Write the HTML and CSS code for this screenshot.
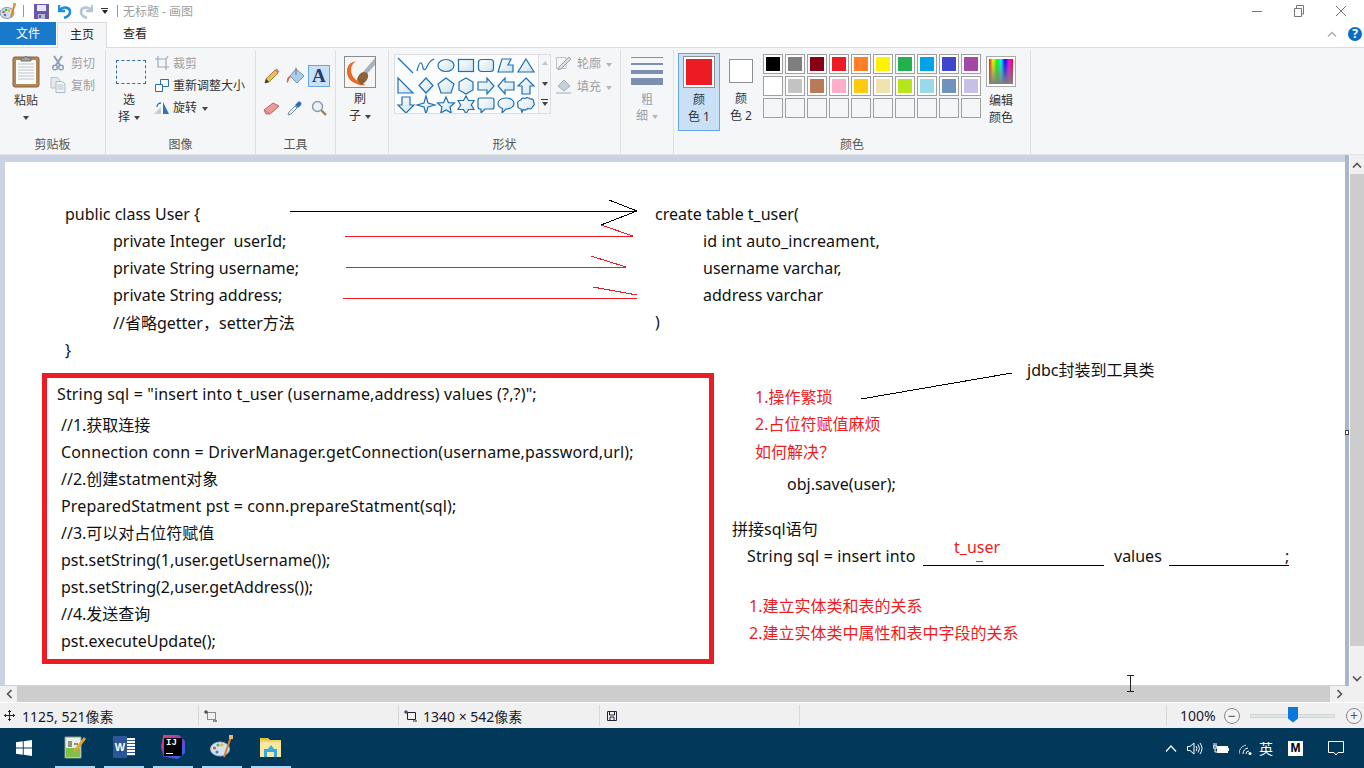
FILE: index.html
```html
<!DOCTYPE html>
<html lang="zh">
<head>
<meta charset="utf-8">
<title>无标题 - 画图</title>
<link rel="stylesheet" href="styles.css">
</head>
<body>
<div class="window">
  <header class="titlebar">
    <svg class="qa-paint" width="17" height="18" viewBox="0 0 17 18"><ellipse cx="7" cy="11" rx="7" ry="5.5" fill="#cfe0ee" stroke="#7d97ad"/><circle cx="3.5" cy="10" r="1.3" fill="#d9534f"/><circle cx="6" cy="8" r="1.3" fill="#4fa84f"/><circle cx="9" cy="8.5" r="1.3" fill="#e6b82e"/><circle cx="5" cy="13" r="1.3" fill="#3a7fc4"/><path d="M15 1 L11 15" stroke="#d5842c" stroke-width="2"/><path d="M13 1h3v3h-3z" fill="#e8a04a"/></svg>
    <span class="qa-sep"></span>
    <svg class="qa-save" width="15" height="15" viewBox="0 0 15 15"><path d="M0 0H15V15H0Z" fill="#6a58a8"/><path d="M3 1H12V7H3Z" fill="#e8e6f2"/><path d="M4 10H11V15H4Z" fill="#bdb7d8"/><path d="M5 11H7V14H5Z" fill="#6a58a8"/></svg>
    <svg class="qa-undo" width="14" height="15" viewBox="0 0 14 15"><path d="M1 1V7H7" fill="none" stroke="#1a8ddc" stroke-width="2.4"/><path d="M2 6C5 2 12 3 12 8C12 11 9 13 6 14" fill="none" stroke="#1a8ddc" stroke-width="2.6"/></svg>
    <svg class="qa-redo" width="14" height="15" viewBox="0 0 14 15"><path d="M13 1V7H7" fill="none" stroke="#b4c6d6" stroke-width="2.4"/><path d="M12 6C9 2 2 3 2 8C2 11 5 13 8 14" fill="none" stroke="#b4c6d6" stroke-width="2.6"/></svg>
    <span class="qa-more"><i class="bar"></i><i class="caret dark"></i></span>
    <span class="qa-sep second"></span>
    <span class="title-text">无标题 - 画图</span>
    <div class="winctl">
      <svg width="12" height="12" viewBox="0 0 12 12"><path d="M1 6.500H11" stroke="#777"/></svg>
      <svg width="12" height="12" viewBox="0 0 12 12"><path d="M1.500 3.500H8.500V11.500H1.500ZM3.500 3V0.500H10.500V9H9" fill="none" stroke="#777"/></svg>
      <svg width="12" height="12" viewBox="0 0 12 12"><path d="M1 1L11 11M11 1L1 11" stroke="#777"/></svg>
    </div>
  </header>

  <nav class="tabs">
    <span class="tab file">文件</span>
    <span class="tab active">主页</span>
    <span class="tab view">查看</span>
    <div class="tabs-end">
      <svg width="10" height="6" viewBox="0 0 10 6"><path d="M1 5.500L5 1.500L9 5.500" fill="none" stroke="#aaa" stroke-width="1.300"/></svg>
      <span class="help">?</span>
    </div>
  </nav>

  <section class="ribbon">
    <div class="group g-clip">
      <div class="body">
        <div class="bigbtn paste">
          <svg width="28" height="33" viewBox="0 0 28 33"><rect x="1" y="2" width="26" height="30" rx="2" fill="#b08558" stroke="#8a6238"/><rect x="4" y="5" width="20" height="24" fill="#fbfbf6"/><path d="M6 9H22M6 12H22M6 15H22M6 18H22M6 21H22M6 24H22" stroke="#b9c4cf"/><path d="M9 6V3H12L14 1L16 3H19V6Z" fill="#9ea4aa" stroke="#6d7379"/></svg>
          <span class="t top">粘贴</span>
          <i class="caret dark below"></i>
        </div>
        <div class="rows">
          <div class="row off"><svg width="12" height="16" viewBox="0 0 12 16"><path d="M2 1L8 10M10 1L4 10" stroke="#8da0b5" stroke-width="2"/><circle cx="3" cy="12.500" r="2.300" fill="none" stroke="#8da0b5" stroke-width="1.500"/><circle cx="9" cy="12.500" r="2.300" fill="none" stroke="#8da0b5" stroke-width="1.500"/></svg><span>剪切</span></div>
          <div class="row off"><svg width="15" height="16" viewBox="0 0 15 16"><path d="M0.500 0.500H7L9 3V11H0.500Z" fill="#e4eaf0" stroke="#b5c2cf"/><path d="M5.500 4.500H12L14.500 7V15.500H5.500Z" fill="#f2f5f8" stroke="#a9b8c7"/><path d="M7 8H13M7 10H13M7 12H13" stroke="#b5c2cf"/></svg><span>复制</span></div>
        </div>
      </div>
      <div class="label">剪贴板</div>
    </div>

    <div class="group g-image">
      <div class="body">
        <div class="bigbtn select">
          <span class="marquee"></span>
          <span class="t top">选</span>
          <span class="t">择<i class="caret dark"></i></span>
        </div>
        <div class="rows">
          <div class="row off"><svg width="14" height="14" viewBox="0 0 14 14"><path d="M3 0V11H14M0 3H11V14M11 3L13 0" fill="none" stroke="#9aaabb" stroke-width="1.200"/></svg><span>裁剪</span></div>
          <div class="row"><svg width="14" height="13" viewBox="0 0 14 13"><path d="M5.500 0.500H13.500V7.500H5.500Z" fill="#fff" stroke="#2a6fb3"/><path d="M0.500 5.500H7.500V12.500H0.500Z" fill="#fff" stroke="#2a6fb3"/></svg><span>重新调整大小</span></div>
          <div class="row"><svg width="16" height="13" viewBox="0 0 16 13"><path d="M0 13L7 6V13Z" fill="#c8ced5"/><path d="M9 1L15 13H9Z" fill="#2f77b8"/><path d="M3 6C3 3 5 2 7 2" fill="none" stroke="#2f77b8" stroke-width="1.300"/></svg><span>旋转<i class="caret dark"></i></span></div>
        </div>
      </div>
      <div class="label">图像</div>
    </div>

    <div class="group g-tools">
      <div class="body">
        <div class="toolgrid">
          <span class="tool"><svg width="16" height="16" viewBox="0 0 16 16"><path d="M2 11L11 2L14 5L5 14L1 15Z" fill="#efc24f" stroke="#7d6430" stroke-width=".8"/><path d="M11 2L12.500 0.500L15.500 3.500L14 5Z" fill="#d98080"/><path d="M1 15L2 11L5 14Z" fill="#333"/></svg></span>
          <span class="tool"><svg width="19" height="18" viewBox="0 0 19 18"><path d="M10 2L18 9L11 16L4 9Z" fill="#a9cdea" stroke="#6b93b5"/><path d="M10 0.500V8" stroke="#777"/><path d="M4 9C1 10 0.500 13 1 16C3 15 2.500 11 5 10Z" fill="#e8622a"/></svg></span>
          <span class="tool on"><span class="glyph-a">A</span></span>
          <span class="tool"><svg width="17" height="14" viewBox="0 0 17 14"><path d="M1 9L10 2L16 5L7 13L3 13Z" fill="#ef9a9a" stroke="#b86a6a"/><path d="M1 9L7 13L16 5" fill="none" stroke="#c77"/></svg></span>
          <span class="tool"><svg width="16" height="16" viewBox="0 0 16 16"><path d="M1 15L2 12L8 6L10 8L4 14Z" fill="#e6edf4" stroke="#7a8da0"/><path d="M8 5L11 2C12.500 0.500 15.500 3.500 14 5L11 8Z" fill="#2b6fb5"/></svg></span>
          <span class="tool"><svg width="16" height="16" viewBox="0 0 16 16"><circle cx="6.500" cy="6.500" r="5" fill="#e9f2f9" stroke="#8b9aa8" stroke-width="1.400"/><path d="M10.500 10.500L15 15" stroke="#9a7a4f" stroke-width="2.200"/></svg></span>
        </div>
      </div>
      <div class="label">工具</div>
    </div>

    <div class="group g-brush">
      <div class="body">
        <div class="bigbtn brush">
          <svg class="brush-ic" width="32" height="32" viewBox="0 0 32 32"><rect x=".5" y=".5" width="31" height="31" fill="#f6f6f6" stroke="#8c8c8c"/><path d="M31 2L19 16L22 19L31 9Z" fill="#a9b2bd"/><path d="M9 6C2 8 1 18 6 24C11 28 16 30 22 29C14 26 7 22 7 14C7 11 8 8 12 5Z" fill="#ea6a24"/><path d="M13 24C14 18 19 14 23 17C26 20 23 26 17 29Z" fill="#8d6239"/></svg>
          <span class="t top">刷</span>
          <span class="t">子<i class="caret dark"></i></span>
        </div>
      </div>
      <div class="label">&nbsp;</div>
    </div>

    <div class="group g-shapes">
      <div class="body">
        <div class="gallery">
          <svg class="shapes" width="142" height="58" viewBox="0 -1 142 58">
            <defs><linearGradient id="sg" x1="0" y1="0" x2="1" y2="1"><stop offset="0" stop-color="#fff"/><stop offset="1" stop-color="#cfe3ee"/></linearGradient></defs>
            <g transform="translate(0 0)"><path d="M2 2L17 17"/></g>
            <g transform="translate(20 0)"><path class="nf" d="M1 15C4 3 6 6 7 12C9 17 11 10 13 7C15 4 17 4 18 3"/></g>
            <g transform="translate(40 0)"><ellipse cx="10" cy="9.500" rx="8" ry="6"/></g>
            <g transform="translate(60 0)"><rect x="2.500" y="3.500" width="15" height="12"/></g>
            <g transform="translate(80 0)"><rect x="2.500" y="3.500" width="15" height="12" rx="3"/></g>
            <g transform="translate(100 0)"><path d="M2 16L6 3H15L12 9H17V16Z"/></g>
            <g transform="translate(120 0)"><path d="M10 3L18 16H2Z"/></g>
            <g transform="translate(0 20)"><path d="M2 2V17H17Z"/></g>
            <g transform="translate(20 20)"><path d="M10 2L17 9.500L10 17L3 9.500Z"/></g>
            <g transform="translate(40 20)"><path d="M10 2L18 8L15 17H5L2 8Z"/></g>
            <g transform="translate(60 20)"><path d="M10 2L17 6V14L10 18L3 14V6Z"/></g>
            <g transform="translate(80 20)"><path d="M2 6H11V2L18 10L11 18V14H2Z"/></g>
            <g transform="translate(100 20)"><path d="M18 6H9V2L2 10L9 18V14H18Z"/></g>
            <g transform="translate(120 20)"><path d="M10 2L18 10H14V18H6V10H2Z"/></g>
            <g transform="translate(0 39)"><path d="M6 2H14V10H18L10 18L2 10H6Z"/></g>
            <g transform="translate(20 39)"><path d="M10 1L12 8L19 10L12 12L10 19L8 12L1 10L8 8Z"/></g>
            <g transform="translate(40 39)"><path d="M10 2L12.400 7.600L18.500 8L14 12L15.300 18L10 15L4.700 18L6 12L1.500 8L7.600 7.600Z"/></g>
            <g transform="translate(60 39)"><path d="M10 1L12.500 5.500H18L15.300 10L18 14.500H12.500L10 19L7.500 14.500H2L4.700 10L2 5.500H7.500Z"/></g>
            <g transform="translate(80 39)"><path d="M4 3H16Q18 3 18 5V12Q18 14 16 14H9L5 18V14H4Q2 14 2 12V5Q2 3 4 3Z"/></g>
            <g transform="translate(100 39)"><path d="M10 3C15 3 18 5.500 18 8.500C18 11.500 15 14 10 14L6 18L6.500 13.500C3.500 12.500 2 10.500 2 8.500C2 5.500 5 3 10 3Z"/></g>
            <g transform="translate(120 39)"><path d="M5 5Q6 2 9 3.500Q12 1.500 14 4Q18 3.500 17.500 7Q19.500 10 16.500 11.500Q16 15 12 13.500Q9 16 7 14.500L6 17.500L5 14Q1 13 2 10Q0.500 6 5 5Z"/></g>
          </svg>
          <div class="gal-scroll">
            <i class="gal-up"></i>
            <i class="caret dark"></i>
            <span class="gal-more"><i class="bar"></i><i class="caret dark"></i></span>
          </div>
        </div>
        <div class="rows tight">
          <div class="row off"><svg width="16" height="14" viewBox="0 0 16 14"><path d="M0.500 1.500H10V12.500H0.500Z" fill="#f4f5f7" stroke="#b9c3cd"/><path d="M3 11L13 1L15 3L5 13L2 13.500Z" fill="#d7dde3" stroke="#9aa7b4"/></svg><span>轮廓<i class="caret pale"></i></span></div>
          <div class="row off"><svg width="16" height="15" viewBox="0 0 16 15"><path d="M8 1L14 7L8 12L2 7Z" fill="#c4d0dc" stroke="#a0aebb"/><path d="M0 13H15V15H0Z" fill="#c9d2db"/></svg><span>填充<i class="caret pale"></i></span></div>
        </div>
      </div>
      <div class="label">形状</div>
    </div>

    <div class="group g-size">
      <div class="body">
        <div class="bigbtn size">
          <span class="sizeline s1"></span>
          <span class="sizeline s2"></span>
          <span class="sizeline s3"></span>
          <span class="sizeline s4"></span>
          <span class="t top off">粗</span>
          <span class="t off">细<i class="caret pale"></i></span>
        </div>
      </div>
      <div class="label">&nbsp;</div>
    </div>

    <div class="group g-colors">
      <div class="body">
        <div class="colbtn sel">
          <span class="well big"><i class="red"></i></span>
          <span class="t top">颜</span>
          <span class="t">色 1</span>
        </div>
        <div class="colbtn plain">
          <span class="well small"><i class="white"></i></span>
          <span class="t top">颜</span>
          <span class="t">色 2</span>
        </div>
        <div class="palette">
          <span class="sw"><i class="c01"></i></span><span class="sw"><i class="c02"></i></span><span class="sw"><i class="c03"></i></span><span class="sw"><i class="c04"></i></span><span class="sw"><i class="c05"></i></span><span class="sw"><i class="c06"></i></span><span class="sw"><i class="c07"></i></span><span class="sw"><i class="c08"></i></span><span class="sw"><i class="c09"></i></span><span class="sw"><i class="c10"></i></span>
          <span class="sw"><i class="c11"></i></span><span class="sw"><i class="c12"></i></span><span class="sw"><i class="c13"></i></span><span class="sw"><i class="c14"></i></span><span class="sw"><i class="c15"></i></span><span class="sw"><i class="c16"></i></span><span class="sw"><i class="c17"></i></span><span class="sw"><i class="c18"></i></span><span class="sw"><i class="c19"></i></span><span class="sw"><i class="c20"></i></span>
          <span class="sw"></span><span class="sw"></span><span class="sw"></span><span class="sw"></span><span class="sw"></span><span class="sw"></span><span class="sw"></span><span class="sw"></span><span class="sw"></span><span class="sw"></span>
        </div>
        <div class="colbtn edit">
          <span class="rainbow"></span>
          <span class="t top">编辑</span>
          <span class="t">颜色</span>
        </div>
      </div>
      <div class="label">颜色</div>
    </div>
  </section>

  <main class="workspace">
    <div class="ws-main">
      <div class="canvas-area">
        <div class="canvas">
          <svg class="ink" width="1340" height="523" viewBox="0 0 1340 523">
            <g class="k">
              <path d="M285 49.500H632M604 38L632 49L596 63"/>
              <path d="M856 237L1007 211"/>
              <path d="M918 403.500H1099M1164 403.500H1284"/>
            </g>
            <g class="r">
              <path d="M340 74.500H628M596 63L628 74"/>
              <path d="M341 105.500H621M586 94L621 105"/>
              <path d="M338 136.500H632M588 125L632 133"/>
              <path d="M971 399.500H978"/>
            </g>
          </svg>
          <div class="note n-class">
            <div>public class User {</div>
            <div class="in">private Integer&nbsp; userId;</div>
            <div class="in">private String username;</div>
            <div class="in">private String address;</div>
            <div class="in">//省略getter<span class="tc">，</span>setter方法</div>
            <div>}</div>
          </div>
          <div class="note n-table">
            <div>create table t_user(</div>
            <div class="in wide">id int auto_increament,</div>
            <div class="in">username varchar,</div>
            <div class="in">address varchar</div>
            <div>)</div>
          </div>
          <div class="redbox">
            <div class="sqlhead wide">String sql = "insert into t_user (username,address) values (?,?)";</div>
            <div class="note-flow">
              <div>//1.获取连接</div>
              <div class="wide">Connection conn = DriverManager.getConnection(username,password,url);</div>
              <div>//2.创建statment对象</div>
              <div class="wide">PreparedStatment pst = conn.prepareStatment(sql);</div>
              <div>//3.可以对占位符赋值</div>
              <div>pst.setString(1,user.getUsername());</div>
              <div>pst.setString(2,user.getAddress());</div>
              <div>//4.发送查询</div>
              <div>pst.executeUpdate();</div>
            </div>
          </div>
          <div class="note n-jdbc">jdbc封装到工具类</div>
          <div class="note n-why red-t">
            <div>1.操作繁琐</div>
            <div>2.占位符赋值麻烦</div>
            <div>如何解决<span class="tc">？</span></div>
          </div>
          <div class="note n-save">obj.save(user);</div>
          <div class="note n-join">拼接sql语句</div>
          <div class="note n-sql wide">String sql = insert into</div>
          <div class="note n-values">values</div>
          <div class="note n-semi">;</div>
          <div class="note n-tuser red-t">t_user</div>
          <div class="note n-rel red-t">
            <div>1.建立实体类和表的关系</div>
            <div>2.建立实体类中属性和表中字段的关系</div>
          </div>
        </div>
        <span class="handle"></span>
      </div>
      <div class="vscroll">
        <span class="sb-btn"><svg width="10" height="6" viewBox="0 0 10 6"><path d="M1 5.500L5 1.500L9 5.500" fill="none" stroke="#555" stroke-width="1.600"/></svg></span>
        <span class="v-thumb"></span>
        <span class="sb-btn end"><svg width="10" height="6" viewBox="0 0 10 6"><path d="M1 0.500L5 4.500L9 0.500" fill="none" stroke="#555" stroke-width="1.600"/></svg></span>
      </div>
    </div>
    <div class="hscroll">
      <span class="h-btn"><svg width="6" height="10" viewBox="0 0 6 10"><path d="M5.500 1L1.500 5L5.500 9" fill="none" stroke="#555" stroke-width="1.600"/></svg></span>
      <span class="h-thumb"></span>
      <span class="h-btn right"><svg width="6" height="10" viewBox="0 0 6 10"><path d="M0.500 1L4.500 5L0.500 9" fill="none" stroke="#555" stroke-width="1.600"/></svg></span>
    </div>
    <svg class="ibeam" width="9" height="17" viewBox="0 0 9 17"><path d="M1 0.500H8M1 16.500H8M4.500 1V16" fill="none" stroke="#222"/></svg>
  </main>

  <footer class="status">
    <div class="cell c-pos"><svg width="11" height="11" viewBox="0 0 11 11"><path d="M5.500 0V11M0 5.500H11M4 1.500H7M4 9.500H7M1.500 4V7M9.500 4V7" stroke="#223"/></svg><span>1125, 521像素</span></div>
    <div class="cell c-sel"><svg width="13" height="12" viewBox="0 0 13 12"><path d="M3.500 2.500H11.500V9.500H3.500Z" fill="none" stroke="#223" stroke-dasharray="1 1"/><path d="M2 0V4M0 2H4M9 11H13" stroke="#223"/></svg></div>
    <div class="cell c-size"><svg width="13" height="12" viewBox="0 0 13 12"><path d="M3.500 2.500H11.500V9.500H3.500Z" fill="none" stroke="#223"/><path d="M2 0V4M0 2H4M9 11H13" stroke="#223"/></svg><span>1340 × 542像素</span></div>
    <div class="cell c-disk"><svg width="10" height="10" viewBox="0 0 10 10"><path d="M.5.500H9.500V9.500H.5Z" fill="none" stroke="#223"/><path d="M2.500 1V4H7.500V1M3 9V6H7V9" fill="none" stroke="#223"/></svg></div>
    <div class="cell c-blank"></div>
    <div class="cell c-zoom">
      <span class="pct">100%</span>
      <span class="round">−</span>
      <span class="slider"><i class="knob"></i></span>
      <span class="round">+</span>
    </div>
  </footer>

  <div class="taskbar">
    <svg class="start" width="16" height="16" viewBox="0 0 16 16"><path d="M0 2.300L6.800 1.300V7.500H0ZM7.700 1.200L16 0V7.500H7.700ZM0 8.500H6.800V14.700L0 13.700ZM7.700 8.500H16V16L7.700 14.800Z" fill="#fff"/></svg>
    <ul class="tasks">
      <li><svg width="24" height="24" viewBox="0 0 24 24"><path d="M2 2H18V23H2Z" fill="#e9eee3" stroke="#8a9a86"/><path d="M3 13H17V22H3Z" fill="#7fc04a"/><path d="M6 6V12M8 6V12M11 9H15" stroke="#333"/><path d="M10 16L21 2L23 4L12 18Z" fill="#e0a32c"/></svg></li>
      <li><span class="word"><span class="w-doc"></span><span class="w-w">W</span></span></li>
      <li><span class="ij"><span class="ij-box">IJ<i class="ij-bar"></i></span></span></li>
      <li><svg width="24" height="24" viewBox="0 0 24 24"><ellipse cx="10" cy="14" rx="9.500" ry="7" fill="#d4e4ef" stroke="#9fb6c8"/><circle cx="4.500" cy="13" r="1.600" fill="#d9534f"/><circle cx="8" cy="10" r="1.600" fill="#5fae52"/><circle cx="12" cy="10" r="1.600" fill="#e6b82e"/><circle cx="7" cy="17" r="1.600" fill="#3a7fc4"/><path d="M21 2L14 22" stroke="#d5842c" stroke-width="2"/><path d="M19 0H23V4H19Z" fill="#e8b878"/></svg></li>
      <li><svg width="22" height="20" viewBox="0 0 22 20"><path d="M0 1H8L10 3H21V20H0Z" fill="#f4d35e"/><path d="M0 5H21V20H0Z" fill="#fbe8a0"/><path d="M1 1H8V3H1Z" fill="#e7bd40"/><path d="M4 20V12H8L11 8L14 12H17V20H14V15H7V20Z" fill="#33a9de"/></svg></li>
    </ul>
    <div class="tray">
      <svg width="12" height="7" viewBox="0 0 12 7"><path d="M1 6.500L6 1L11 6.500" fill="none" stroke="#fff" stroke-width="1.200"/></svg>
      <svg width="16" height="13" viewBox="0 0 16 13"><path d="M.5 4.500H3L7 1V12L3 8.500H.5Z" fill="none" stroke="#fff"/><path d="M9 4Q11 6.500 9 9M11 2.500Q14 6.500 11 10.500M13 1Q17 6.500 13 12" fill="none" stroke="#fff"/></svg>
      <svg width="16" height="11" viewBox="0 0 16 11"><path d="M4 3H15V10H4Z" fill="#fff"/><path d="M15 5H16V8H15Z" fill="#fff"/><path d="M1 0V3M3 0V3M0 3H4V5H0ZM2 5V9H4" fill="none" stroke="#fff"/></svg>
      <svg width="13" height="13" viewBox="0 0 13 13"><path d="M0 12Q0 5 7 3M0 12" fill="none" stroke="#c5d0d8"/><path d="M4 12Q4 7 9 6M7 12Q7 9 10 9" fill="none" stroke="#fff"/><circle cx="11" cy="11.500" r="1.500" fill="#fff"/></svg>
      <span class="ime">英</span>
      <span class="ime-m">M</span>
      <svg class="msg" width="16" height="15" viewBox="0 0 16 15"><path d="M.5.500H15.500V11.500H10L8 14L6 11.500H.5Z" fill="none" stroke="#fff"/></svg>
    </div>
  </div>
</div>
</body>
</html>
```
FILE: styles.css
```css
* { box-sizing: border-box; }
html, body { margin: 0; padding: 0; }
body { font-family: "Noto Sans", "Noto Sans CJK SC", sans-serif; font-size: 12px; color: #333; background: #fff; overflow: hidden; }
i { display: block; font-style: normal; }
ul { margin: 0; padding: 0; list-style: none; }
.window { width: 1364px; height: 768px; display: flex; flex-direction: column; overflow: hidden; }

/* title bar */
.titlebar { height: 22px; display: flex; align-items: center; flex: none; background: #fff; }
.qa-paint { margin-left: 0; }
.qa-sep { width: 1px; height: 12px; background: #999; margin-left: 6px; }
.qa-sep.second { margin-left: 9px; }
.qa-save { margin-left: 10px; }
.qa-undo { margin-left: 9px; }
.qa-redo { margin-left: 7px; }
.qa-more { margin-left: 8px; display: flex; flex-direction: column; align-items: center; gap: 1px; }
.bar { width: 7px; height: 1px; background: #333; }
.title-text { margin-left: 5px; color: #a0a0a0; font-size: 12px; }
.winctl { margin-left: auto; display: flex; gap: 30px; padding-right: 17px; align-items: center; }
.winctl svg { display: block; }
.caret { display: inline-block; width: 0; height: 0; border-left: 3.5px solid transparent; border-right: 3.5px solid transparent; border-top: 4px solid #444; vertical-align: middle; margin-left: 4px; }
.qa-more .caret { margin-left: 0; border-top-color: #222; }
.caret.pale { border-top-color: #b4b8bd; }

/* tabs */
.tabs { height: 26px; flex: none; display: flex; background: #fff; border-bottom: 1px solid #dadbdc; align-items: flex-start; }
.tab { height: 23px; line-height: 23px; text-align: center; color: #222; }
.tab.file { width: 56px; background: #1979ca; color: #fff; }
.tab.active { width: 50px; height: 26px; margin-left: 1px; background: #f5f6f7; border: 1px solid #dadbdc; border-bottom: 0; line-height: 24px; }
.tab.view { width: 56px; }
.tabs-end { margin-left: auto; display: flex; align-items: center; gap: 11px; padding: 5px 2px 0 0; }
.help { width: 14px; height: 14px; border-radius: 50%; background: #0a6cc4; color: #fff; font-weight: 700; font-size: 12px; line-height: 14px; text-align: center; }

/* ribbon */
.ribbon { height: 107px; flex: none; display: flex; background: #f5f6f7; padding-top: 2px; border-bottom: 1px solid #e3e4e6; }
.group { height: 104px; display: flex; flex-direction: column; border-right: 1px solid #dfe0e2; flex: none; }
.body { height: 86px; display: flex; }
.label { height: 17px; line-height: 18px; text-align: center; color: #555; }
.g-clip { width: 106px; }
.g-image { width: 150px; }
.g-tools { width: 80px; }
.g-brush { width: 53px; }
.g-shapes { width: 232px; }
.g-size { width: 53px; }
.g-colors { width: 357px; }
.t { display: block; height: 17px; line-height: 17px; white-space: nowrap; text-align: center; color: #333; }
.t.off, .row.off { color: #9c9fa3; }
.bigbtn { display: flex; flex-direction: column; align-items: center; flex: none; }
.paste { width: 54px; padding-top: 5px; margin-left: -1px; }
.paste .top { margin-top: 4px; }
.below { margin: 7px 0 0; }
.rows { display: flex; flex-direction: column; padding-top: 2px; }
.row { height: 22px; display: flex; align-items: center; gap: 5px; white-space: nowrap; }
.row svg { flex: none; width: 16px; }
.row .caret { margin-left: 5px; }
.g-clip .rows { margin-left: -3px; }
.select { width: 46px; padding-top: 10px; }
.marquee { width: 30px; height: 24px; border: 1px dashed #2a6fb3; margin-left: 4px; }
.select .top { margin-top: 7px; }
.g-image .rows { margin-left: 2px; }
.g-image .row { gap: 3px; }
.toolgrid { display: grid; grid-template-columns: repeat(3, 23.500px); grid-auto-rows: 32px; align-items: center; justify-items: center; padding: 10px 0 0 4px; }
.tool { width: 22px; height: 22px; display: flex; align-items: center; justify-content: center; border: 1px solid transparent; }
.tool.on { background: #c9e0f7; border-color: #66a7e8; }
.glyph-a { font-family: "Liberation Serif", serif; font-weight: 700; font-size: 19px; line-height: 20px; color: #1c3f6f; }
.brush { width: 50px; padding-top: 6px; margin-left: -1px; }
.brush .top { margin-top: 2px; }
.gallery { margin: 4px 0 0 5px; width: 157px; height: 60px; display: flex; border: 1px solid #dcdde0; background: #fbfcfd; flex: none; }
.shapes { display: block; margin-left: 1px; flex: none; }
.shapes path, .shapes rect, .shapes ellipse { fill: url(#sg); stroke: #1f6fb2; stroke-width: 1.200; }
.shapes path.nf { fill: none; }
.gal-scroll { margin-left: auto; width: 14px; height: 58px; border-left: 1px solid #dcdde0; background: #f5f6f7; display: flex; flex-direction: column; align-items: center; padding-top: 6px; }
.gal-scroll .caret { margin: 0; }
.gal-scroll > .caret { margin-top: 17px; }
.gal-up { width: 0; height: 0; border-left: 3.5px solid transparent; border-right: 3.5px solid transparent; border-bottom: 4px solid #c4c7cb; }
.gal-more { display: flex; flex-direction: column; align-items: center; gap: 2px; margin-top: 13px; }
.rows.tight { margin-left: 5px; padding-top: 2px; gap: 1px; }
.size { width: 52px; padding-top: 7px; }
.sizeline { width: 32px; background: #7d8fae; flex: none; }
.s1 { height: 1px; }
.s2 { height: 2px; margin-top: 5px; }
.s3 { height: 4px; margin-top: 5px; }
.s4 { height: 7px; margin-top: 4px; }
.size .top { margin-top: 7px; }
.size .t { height: 16px; line-height: 16px; }
.g-colors .body { padding-left: 4px; }
.colbtn { display: flex; flex-direction: column; align-items: center; flex: none; }
.colbtn.sel { width: 42px; height: 78px; margin-top: 3px; padding-top: 2px; background: #c9e0f7; border: 1px solid #66a7e8; }
.colbtn.sel .top { margin-top: 3px; }
.colbtn.plain { width: 42px; padding-top: 9px; }
.colbtn.plain .top { margin-top: 7px; }
.well { display: block; border: 1px solid #909090; padding: 2px; background: #fff; }
.well i { width: 100%; height: 100%; }
.well.big { width: 32px; height: 32px; }
.well.small { width: 24px; height: 24px; }
.red { background: #ed1c24; }
.white { background: #fff; }
.palette { display: grid; grid-template-columns: repeat(10, 20px); grid-auto-rows: 20px; gap: 2px; margin: 4px 0 0 1px; flex: none; }
.sw { display: block; border: 1px solid #a0a0a0; padding: 2px; background: #fff; }
.palette .sw:nth-child(n+21) { background: transparent; }
.sw i { width: 100%; height: 100%; }
.c01 { background: #000; } .c02 { background: #7f7f7f; } .c03 { background: #880015; } .c04 { background: #ed1c24; } .c05 { background: #ff7f27; }
.c06 { background: #fff200; } .c07 { background: #22b14c; } .c08 { background: #00a2e8; } .c09 { background: #3f48cc; } .c10 { background: #a349a4; }
.c11 { background: #fff; } .c12 { background: #c3c3c3; } .c13 { background: #b97a57; } .c14 { background: #ffaec9; } .c15 { background: #ffc90e; }
.c16 { background: #efe4b0; } .c17 { background: #b5e61d; } .c18 { background: #99d9ea; } .c19 { background: #7092be; } .c20 { background: #c8bfe7; }
.colbtn.edit { width: 30px; margin-left: 5px; padding-top: 7px; }
.rainbow { width: 28px; height: 29px; border: 2px solid #fff; outline: 1px solid #aaa; background: linear-gradient(180deg, rgba(128,128,128,0) 0%, #808080 100%), linear-gradient(90deg, #f00, #ff0, #0f0, #0ff, #00f, #f0f, #f00); }
.edit .top { margin-top: 6px; }

/* workspace */
.workspace { flex: none; height: 548px; display: flex; flex-direction: column; position: relative; background: #fff; }
.ws-main { height: 531px; display: flex; }
.canvas-area { position: relative; width: 1349px; background: linear-gradient(90deg, #c9d3e3 0, #c9d3e3 1345px, #a9b6cf 1345px); padding: 7px 0 0 5px; flex: none; }
.canvas { position: relative; width: 1340px; height: 523px; background: #fff; font-family: "Noto Sans", "Noto Sans CJK SC", sans-serif; font-size: 16px; line-height: 27px; color: #111; }
.handle { position: absolute; left: 1345px; top: 275px; width: 4px; height: 5px; background: #fff; border: 1px solid #444; }
.vscroll { width: 14px; margin-left: 1px; display: flex; flex-direction: column; background: #f0f0f0; }
.sb-btn { height: 19px; display: flex; align-items: center; justify-content: center; flex: none; }
.v-thumb { height: 472px; background: #cdcdcd; flex: none; }
.sb-btn.end { flex: 1; align-items: flex-end; padding-bottom: 4px; }
.hscroll { height: 16px; display: flex; background: #f0f0f0; }
.h-btn { width: 17px; display: flex; align-items: center; justify-content: center; flex: none; }
.h-thumb { width: 1313px; background: #cdcdcd; flex: none; }
.h-btn.right { width: 19px; }
.ibeam { position: absolute; left: 1126px; top: 520px; }

/* canvas annotations */
.ink { position: absolute; left: 0; top: 0; shape-rendering: crispEdges; fill: none; }
.ink .k { stroke: #000; }
.ink .r { stroke: #ed1c24; }
.note { position: absolute; white-space: nowrap; }
.in { padding-left: 48px; }
.wide { letter-spacing: 0.15px; }
.tc { font-family: "Noto Sans CJK TC", sans-serif; }
.red-t { color: #ed1c24; }
.n-class { left: 60px; top: 39px; }
.n-table { left: 650px; top: 39px; }
.redbox { position: absolute; left: 37px; top: 211px; width: 672px; height: 291px; border: 5px solid #ed1c24; padding: 3px 0 0 10px; white-space: nowrap; }
.note-flow { margin: 4px 0 0 4px; }
.n-jdbc { left: 1022px; top: 195px; }
.n-why { left: 750px; top: 222px; }
.n-save { left: 782px; top: 309px; }
.n-join { left: 727px; top: 354px; }
.n-sql { left: 742px; top: 381px; }
.n-values { left: 1109px; top: 381px; }
.n-semi { left: 1280px; top: 381px; }
.n-tuser { left: 949px; top: 372px; }
.n-rel { left: 744px; top: 431px; }

/* status bar */
.status { height: 25px; flex: none; display: flex; background: #f0f0f0; color: #1a1a2a; font-size: 14px; }
.cell { height: 21px; margin-top: 2px; display: flex; align-items: center; border-right: 1px solid #d9d9d9; flex: none; gap: 7px; }
.c-pos { width: 199px; padding-left: 4px; }
.c-sel { width: 200px; padding-left: 5px; }
.c-size { width: 201px; padding-left: 5px; gap: 6px; }
.c-disk { width: 200px; padding-left: 7px; }
.c-blank { width: 367px; }
.c-zoom { flex: 1; border-right: 0; padding-left: 13px; gap: 0; position: relative; }
.pct { width: 44px; }
.round { width: 16px; height: 16px; border: 1px solid #888; border-radius: 50%; line-height: 13px; text-align: center; font-size: 14px; color: #555; background: #f4f4f4; flex: none; }
.slider { width: 85px; height: 4px; margin: 0 11px 0 10px; background: #e2e6e6; border: 1px solid #cfd4d4; position: relative; flex: none; }
.knob { position: absolute; left: 37px; top: -8px; width: 10px; height: 16px; background: #0b78db; clip-path: polygon(0 0, 100% 0, 100% 75%, 50% 100%, 0 75%); }

/* taskbar */
.taskbar { height: 40px; flex: none; display: flex; align-items: center; background: #02395b; position: relative; }
.start { margin-left: 16px; flex: none; }
.tasks { display: flex; margin-left: 23px; height: 40px; }
.tasks li { width: 40px; margin-right: 9px; height: 40px; display: flex; align-items: center; justify-content: center; border-bottom: 2px solid #a8d8f5; }
.word { position: relative; width: 22px; height: 22px; display: block; }
.w-doc { position: absolute; right: 0; top: 2px; width: 13px; height: 18px; background: repeating-linear-gradient(180deg, #fff 0, #fff 2px, #2b579a 2px, #2b579a 3px); }
.w-w { position: absolute; left: 0; top: 0; width: 14px; height: 22px; background: #2b579a; color: #fff; font: 700 11px/22px "Liberation Sans", sans-serif; text-align: center; }
.ij { width: 24px; height: 24px; display: block; padding: 3px; background: linear-gradient(135deg, #ff3e6c, #7a3dd0 55%, #087cfa); clip-path: polygon(10% 0, 75% 0, 100% 25%, 100% 75%, 70% 100%, 10% 90%, 0 50%); }
.ij-box { display: block; position: relative; width: 18px; height: 18px; background: #000; color: #fff; font: 700 9px/11px "Liberation Mono", monospace; padding-left: 2px; }
.ij-bar { position: absolute; left: 2px; bottom: 2px; width: 7px; height: 1px; background: #fff; }
.tray { position: absolute; left: 1165px; top: 0; height: 40px; width: 199px; display: flex; align-items: center; }
.tray svg { flex: none; margin-right: 10px; }
.ime { color: #fff; font-size: 14px; margin: 0 15px 0 -3px; }
.ime-m { width: 15px; height: 15px; background: #fff; color: #000; font: 700 12px/15px "Liberation Sans", sans-serif; text-align: center; margin-right: 25px; }
```
